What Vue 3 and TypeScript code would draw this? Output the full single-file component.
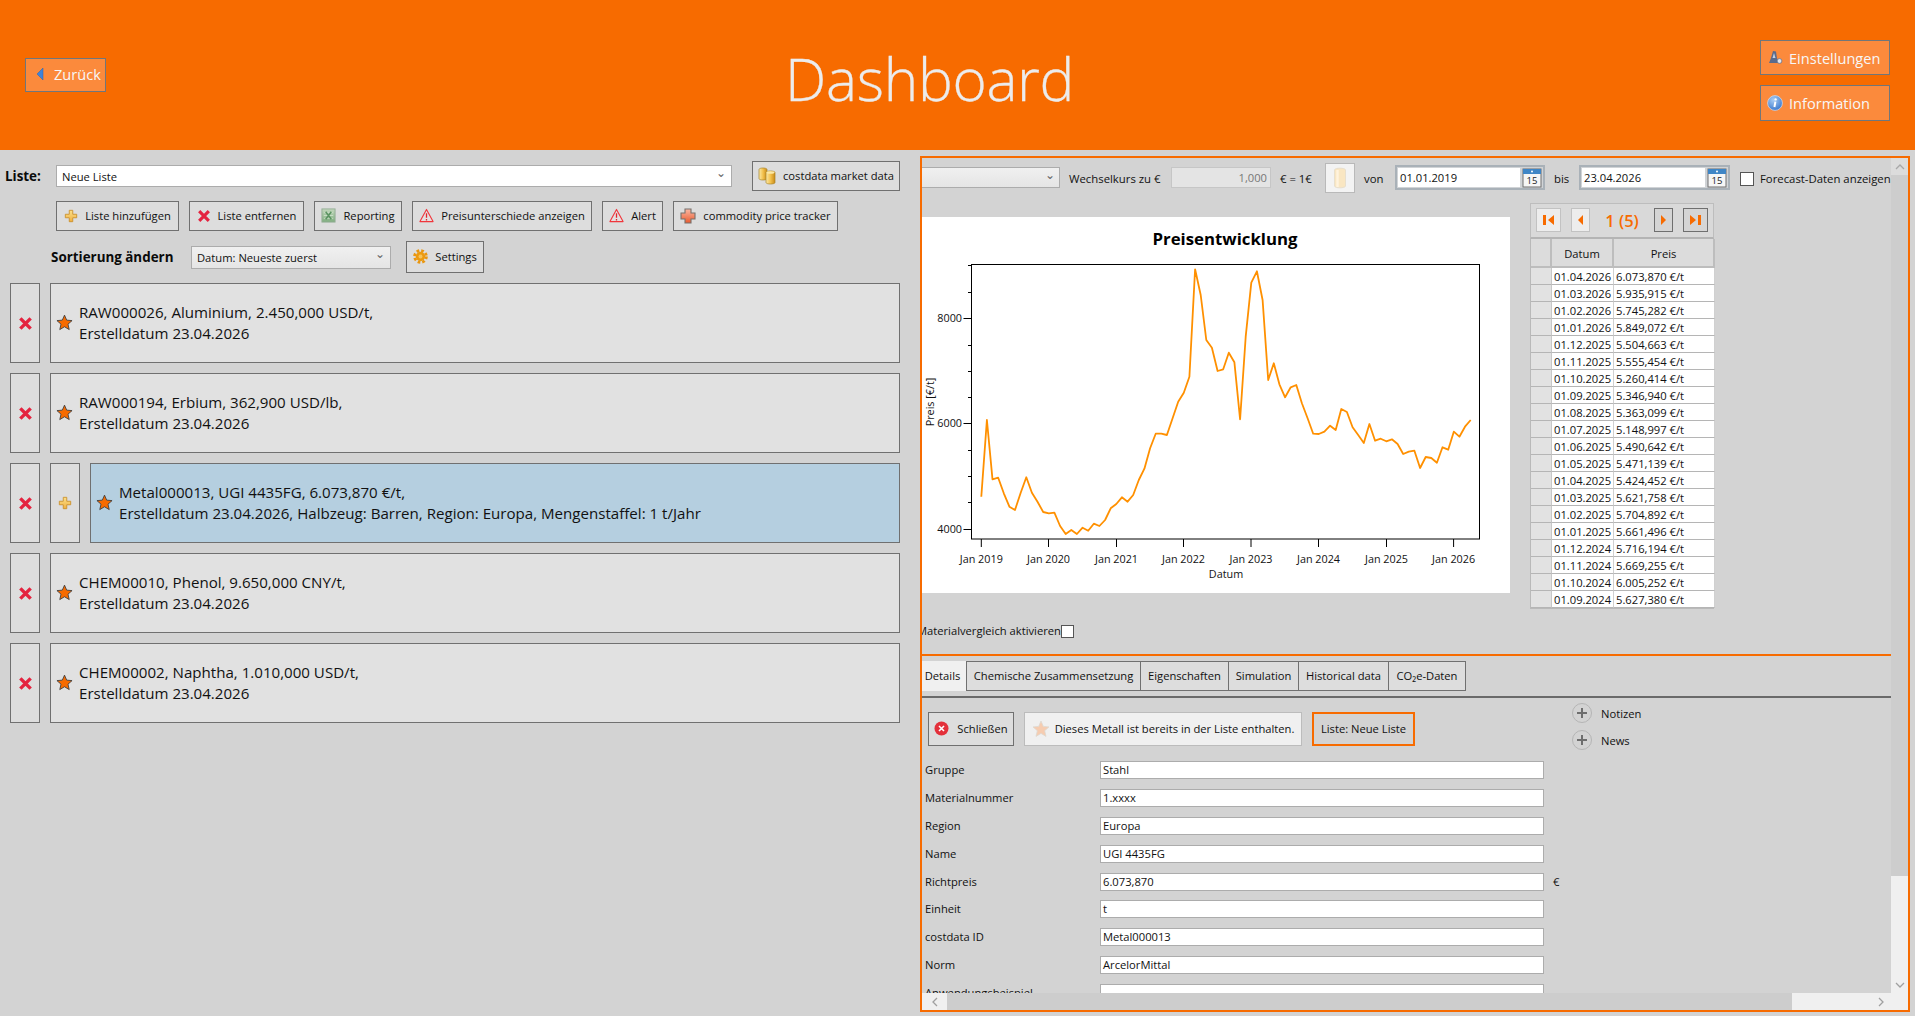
<script setup lang="ts">
interface CardRow { line1: string; line2: string; selected?: boolean }
const cards: CardRow[] = [
  { line1: 'RAW000026, Aluminium, 2.450,000 USD/t,', line2: 'Erstelldatum 23.04.2026' },
  { line1: 'RAW000194, Erbium, 362,900 USD/lb,', line2: 'Erstelldatum 23.04.2026' },
  { line1: 'Metal000013, UGI 4435FG, 6.073,870 €/t,', line2: 'Erstelldatum 23.04.2026, Halbzeug: Barren, Region: Europa, Mengenstaffel: 1 t/Jahr', selected: true },
  { line1: 'CHEM00010, Phenol, 9.650,000 CNY/t,', line2: 'Erstelldatum 23.04.2026' },
  { line1: 'CHEM00002, Naphtha, 1.010,000 USD/t,', line2: 'Erstelldatum 23.04.2026' }
]
const prices: [string, string][] = [
  ['01.04.2026', '6.073,870 €/t'], ['01.03.2026', '5.935,915 €/t'], ['01.02.2026', '5.745,282 €/t'],
  ['01.01.2026', '5.849,072 €/t'], ['01.12.2025', '5.504,663 €/t'], ['01.11.2025', '5.555,454 €/t'],
  ['01.10.2025', '5.260,414 €/t'], ['01.09.2025', '5.346,940 €/t'], ['01.08.2025', '5.363,099 €/t'],
  ['01.07.2025', '5.148,997 €/t'], ['01.06.2025', '5.490,642 €/t'], ['01.05.2025', '5.471,139 €/t'],
  ['01.04.2025', '5.424,452 €/t'], ['01.03.2025', '5.621,758 €/t'], ['01.02.2025', '5.704,892 €/t'],
  ['01.01.2025', '5.661,496 €/t'], ['01.12.2024', '5.716,194 €/t'], ['01.11.2024', '5.669,255 €/t'],
  ['01.10.2024', '6.005,252 €/t'], ['01.09.2024', '5.627,380 €/t']
]
const fields: [string, string][] = [
  ['Gruppe', 'Stahl'], ['Materialnummer', '1.xxxx'], ['Region', 'Europa'], ['Name', 'UGI 4435FG'],
  ['Richtpreis', '6.073,870'], ['Einheit', 't'], ['costdata ID', 'Metal000013'], ['Norm', 'ArcelorMittal'],
  ['Anwendungsbeispiel', '']
]
const tabs = ['Details', 'Chemische Zusammensetzung', 'Eigenschaften', 'Simulation', 'Historical data', 'CO₂e-Daten']

// Traced vertical positions of the monthly price curve, Jan 2019 to Apr 2026.
const trace = [890,660,838,833,880,920,930,878,832,878,905,936,940,938,978,1002,990,1002,983,992,971,978,960,925,912,892,905,885,840,806,745,701,701,705,655,605,578,530,208,285,420,443,513,508,458,487,658,410,248,214,300,540,490,553,592,562,555,610,655,701,702,695,677,690,627,636,682,705,729,672,722,716,724,718,732,762,755,752,804,771,774,788,742,749,695,710,680,660]
const points = trace
  .map((v, i) => `${(59.3 + i * 5.625).toFixed(1)},${(v / 3 - 17).toFixed(1)}`)
  .join(' ')
const yMajor = [{ y: 101, t: '8000' }, { y: 206, t: '6000' }, { y: 312, t: '4000' }]
const yMinor = [48, 75, 128, 154, 180, 233, 259, 285]
const xTicks = [
  { x: 59.3, t: 'Jan 2019' }, { x: 126.5, t: 'Jan 2020' }, { x: 194.5, t: 'Jan 2021' }, { x: 261.5, t: 'Jan 2022' },
  { x: 329, t: 'Jan 2023' }, { x: 396.5, t: 'Jan 2024' }, { x: 464.5, t: 'Jan 2025' }, { x: 531.6, t: 'Jan 2026' }
]
</script>

<template>
  <svg class="defs" width="0" height="0" aria-hidden="true">
    <defs>
      <linearGradient id="gPlus" x1="0" y1="0" x2="0" y2="1"><stop offset="0" stop-color="#fbe08a"/><stop offset="1" stop-color="#f0b040"/></linearGradient>
      <linearGradient id="gGold" x1="0" y1="0" x2="1" y2="0"><stop offset="0" stop-color="#fbe9a8"/><stop offset="0.5" stop-color="#f3c24e"/><stop offset="1" stop-color="#c98a18"/></linearGradient>
      <linearGradient id="gXls" x1="0" y1="0" x2="0" y2="1"><stop offset="0" stop-color="#c3d8bd"/><stop offset="1" stop-color="#7fae7f"/></linearGradient>
      <linearGradient id="gCross" x1="0" y1="0" x2="0" y2="1"><stop offset="0" stop-color="#f9b8a4"/><stop offset="1" stop-color="#ea5a2e"/></linearGradient>
      <radialGradient id="gInfo" cx="0.4" cy="0.3" r="0.8"><stop offset="0" stop-color="#a9cdf4"/><stop offset="1" stop-color="#2f6fc8"/></radialGradient>
      <symbol id="iPlus" viewBox="0 0 16 16"><path d="M6 1.5h4v4.5h4.5v4H10v4.5H6V10H1.5V6H6z" fill="url(#gPlus)" stroke="#c98f2c"/></symbol>
      <symbol id="iX" viewBox="0 0 16 16"><path d="M2.5 2.5l11 11M13.5 2.5l-11 11" stroke="#e4233f" stroke-width="3.6" fill="none"/></symbol>
      <symbol id="iStar" viewBox="0 0 18 18"><path d="M9 1.2l2.3 5.3 5.7.5-4.3 3.8 1.3 5.7L9 13.5l-5 3 1.3-5.7L1 7l5.7-.5z" fill="#f76b00" stroke="#3a3a3a" stroke-width="0.9" stroke-linejoin="round"/></symbol>
      <symbol id="iWarn" viewBox="0 0 16 16"><path d="M8 1.5L15 14.5H1z" fill="#f4e6e6" fill-opacity="0.35" stroke="#f0363c" stroke-width="1.2" stroke-linejoin="round"/><path d="M8 5.5v5M8 11.6v1.6" stroke="#e0262c" stroke-width="1.4"/></symbol>
      <symbol id="iXls" viewBox="0 0 16 16"><rect x="1" y="1" width="14" height="14" fill="url(#gXls)" stroke="#93ac94"/><path d="M3 5h10M3 8h10M3 11h10" stroke="#d6e6d2" stroke-width="0.8"/><path d="M5 4l6 8M11 4l-6 8" stroke="#5c9462" stroke-width="1.6"/></symbol>
      <symbol id="iCross" viewBox="0 0 16 16"><path d="M5 1h6v4h4v6h-4v4H5v-4H1V5h4z" fill="url(#gCross)" stroke="#77706c" stroke-width="1.1"/></symbol>
      <symbol id="iCoins" viewBox="0 0 18 18"><path d="M1 2.5c0-2 8-2 8 0v9c0 2-8 2-8 0z" fill="url(#gGold)" stroke="#a8842a" stroke-width="0.7"/><path d="M8 5.5c0-2 9-2 9 0v10c0 2-9 2-9 0z" fill="url(#gGold)" stroke="#a8842a" stroke-width="0.7"/><ellipse cx="12.5" cy="5.5" rx="4" ry="1.3" fill="#fbe9a8"/></symbol>
      <symbol id="iGear" viewBox="0 0 16 16"><circle cx="8" cy="8" r="6.3" fill="none" stroke="#e9960f" stroke-width="3" stroke-dasharray="2.8 2.15"/><circle cx="8" cy="8" r="5" fill="#ec9a10"/><circle cx="8" cy="8" r="2.1" fill="#f6c45a"/></symbol>
      <symbol id="iCal" viewBox="0 0 20 20"><rect x="1" y="1" width="18" height="18" fill="#f6f6f6" stroke="#6f6f6f"/><rect x="1" y="1" width="18" height="5" fill="#3f86c6"/><circle cx="10" cy="3.5" r="1" fill="#fff"/><text x="10" y="16.4" text-anchor="middle" class="calnum">15</text></symbol>
      <symbol id="iPale" viewBox="0 0 14 22"><path d="M1.5 3c0-2.4 11-2.4 11 0v16c0 2.4-11 2.4-11 0z" fill="#f9e6c2" stroke="#e8dfcd"/><path d="M4.5 3v17" stroke="#fff3dd" stroke-width="2.4"/></symbol>
    </defs>
  </svg>

  <div class="page">
    <header class="top">
      <button class="topbtn back">
        <svg width="8" height="14" viewBox="0 0 8 14"><path d="M7 1v12L1 7z" fill="#3f83d8" stroke="#2b62ad" stroke-width="0.5"/></svg>
        <span>Zurück</span>
      </button>
      <h1 class="title">Dashboard</h1>
      <div class="topright">
        <button class="topbtn wide">
          <svg width="16" height="16" viewBox="0 0 16 16"><path d="M6 1l3 .5 1 7 4 4.5H2l2-5z" fill="#5a6b8c"/><path d="M7 3l1.500 5-3 0z" fill="#c4d0e2"/><circle cx="12.500" cy="11" r="2.400" fill="#e3e7ee" stroke="#5a6a88" stroke-width="0.7"/></svg>
          <span>Einstellungen</span>
        </button>
        <button class="topbtn wide">
          <svg width="16" height="16" viewBox="0 0 16 16"><circle cx="8" cy="8" r="7.400" fill="url(#gInfo)" stroke="#d6e3f4" stroke-width="0.7"/><circle cx="8.600" cy="4.400" r="1.200" fill="#fff"/><path d="M8.400 6.600L7.400 12" stroke="#fff" stroke-width="2"/></svg>
          <span>Information</span>
        </button>
      </div>
    </header>

    <main class="body">
      <section class="left">
        <div class="listrow">
          <label class="bold listlabel">Liste:</label>
          <div class="select listselect"><span>Neue Liste</span><span class="chev">⌄</span></div>
          <button class="btn w-market"><svg class="ic18"><use href="#iCoins"/></svg><span>costdata market data</span></button>
        </div>
        <div class="actions">
          <button class="btn w-add"><svg class="ic14"><use href="#iPlus"/></svg><span>Liste hinzufügen</span></button>
          <button class="btn w-rem"><svg class="ic14"><use href="#iX"/></svg><span>Liste entfernen</span></button>
          <button class="btn w-rep"><svg class="ic15"><use href="#iXls"/></svg><span>Reporting</span></button>
          <button class="btn w-diff"><svg class="ic15"><use href="#iWarn"/></svg><span>Preisunterschiede anzeigen</span></button>
          <button class="btn w-alert"><svg class="ic15"><use href="#iWarn"/></svg><span>Alert</span></button>
          <button class="btn w-track"><svg class="ic16"><use href="#iCross"/></svg><span>commodity price tracker</span></button>
        </div>
        <div class="sortrow">
          <label class="bold sortlabel">Sortierung ändern</label>
          <div class="select sortselect"><span>Datum: Neueste zuerst</span><span class="chev">⌄</span></div>
          <button class="btn w-set"><svg class="ic15"><use href="#iGear"/></svg><span>Settings</span></button>
        </div>
        <div class="cards">
          <div v-for="c in cards" :key="c.line1" class="cardrow">
            <button class="sq"><svg class="ic15"><use href="#iX"/></svg></button>
            <button v-if="c.selected" class="sq"><svg class="ic14"><use href="#iPlus"/></svg></button>
            <div class="card" :class="{ sel: c.selected }">
              <svg class="ic17"><use href="#iStar"/></svg>
              <div class="cardtext"><div>{{ c.line1 }}</div><div>{{ c.line2 }}</div></div>
            </div>
          </div>
        </div>
      </section>

      <section class="panel">
        <div class="scroll">
          <div class="upper">
            <div class="toolbar">
              <div class="select combo"><span></span><span class="chev">⌄</span></div>
              <span class="tlabel">Wechselkurs zu €</span>
              <div class="rate">1,000</div>
              <span class="tlabel">€ = 1€</span>
              <button class="palebtn"><svg width="14" height="22"><use href="#iPale"/></svg></button>
              <span class="tlabel">von</span>
              <div class="date"><span>01.01.2019</span><svg class="cal"><use href="#iCal"/></svg></div>
              <span class="tlabel">bis</span>
              <div class="date"><span>23.04.2026</span><svg class="cal"><use href="#iCal"/></svg></div>
              <div class="forecast"><i class="check"></i><span>Forecast-Daten anzeigen</span></div>
            </div>
            <div class="chartrow">
              <div class="chartcol">
                <svg class="chart" width="588" height="376" viewBox="0 0 588 376">
                  <text x="303" y="28" text-anchor="middle" class="ctitle">Preisentwicklung</text>
                  <rect x="49.5" y="47.5" width="508" height="274.5" fill="none" stroke="#000" stroke-width="1"/>
                  <g stroke="#000" stroke-width="1">
                    <line v-for="y in yMinor" :key="y" x1="46" x2="49.5" :y1="y + 0.5" :y2="y + 0.5"/>
                    <line v-for="m in yMajor" :key="m.t" x1="41.5" x2="49.5" :y1="m.y + 0.5" :y2="m.y + 0.5"/>
                    <line v-for="t in xTicks" :key="t.t" :x1="t.x" :x2="t.x" y1="322" y2="330"/>
                  </g>
                  <text v-for="m in yMajor" :key="m.t + 'l'" x="40" :y="m.y + 4" text-anchor="end" class="ctick">{{ m.t }}</text>
                  <text v-for="t in xTicks" :key="t.t + 'l'" :x="t.x" y="346" text-anchor="middle" class="ctick">{{ t.t }}</text>
                  <text x="304" y="361" text-anchor="middle" class="ctick">Datum</text>
                  <text transform="translate(12 185) rotate(-90)" text-anchor="middle" class="ctick">Preis [€/t]</text>
                  <polyline :points="points" fill="none" stroke="#ff9000" stroke-width="1.8" stroke-linejoin="round"/>
                </svg>
                <div class="compare"><span>Materialvergleich aktivieren</span><i class="check small"></i></div>
              </div>
              <div class="tablebox">
                <div class="pager">
                  <button class="pg w25 off"><svg width="13" height="12" viewBox="0 0 13 12"><path d="M1 1h3v10H1zM12 1v10L6 6z" fill="#f76b00"/></svg></button>
                  <button class="pg w19 off"><svg width="7" height="12" viewBox="0 0 7 12"><path d="M6 1v10L1 6z" fill="#f76b00"/></svg></button>
                  <span class="pagenum">1 (5)</span>
                  <button class="pg w19"><svg width="7" height="12" viewBox="0 0 7 12"><path d="M1 1v10l5-5z" fill="#f76b00"/></svg></button>
                  <button class="pg w25"><svg width="13" height="12" viewBox="0 0 13 12"><path d="M1 1v10l6-5zM9 1h3v10H9z" fill="#f76b00"/></svg></button>
                </div>
                <div class="grid">
                  <div class="gh"></div><div class="gh"><span>Datum</span></div><div class="gh"><span>Preis</span></div>
                  <template v-for="p in prices" :key="p[0]">
                    <div class="rh"></div><div class="gc">{{ p[0] }}</div><div class="gc">{{ p[1] }}</div>
                  </template>
                </div>
              </div>
            </div>
          </div>

          <div class="tabs">
            <button v-for="(t, i) in tabs" :key="t" class="tab" :class="['t' + i, { on: i === 0 }]">{{ t }}</button>
          </div>

          <div class="details">
            <div class="detailmain">
              <div class="detailbtns">
                <button class="btn d-close">
                  <svg width="15" height="15" viewBox="0 0 15 15"><circle cx="7.5" cy="7.5" r="7" fill="#e3303a"/><path d="M5 5l5 5M10 5l-5 5" stroke="#fff" stroke-width="1.6"/></svg>
                  <span>Schließen</span>
                </button>
                <button class="btn d-info">
                  <svg width="18" height="18" viewBox="0 0 18 18"><path d="M9 1l2.3 5.4 5.7.5-4.3 3.8 1.3 5.7L9 13.4l-5 3 1.3-5.7L1 6.9l5.7-.5z" fill="#f6ccb0" stroke="#ddd8d0" stroke-width="0.8"/></svg>
                  <span>Dieses Metall ist bereits in der Liste enthalten.</span>
                </button>
                <button class="btn d-list">Liste: Neue Liste</button>
              </div>
              <div class="form">
                <template v-for="f in fields" :key="f[0]">
                  <span class="flabel">{{ f[0] }}</span>
                  <div class="finput">{{ f[1] }}</div>
                  <span class="funit">{{ f[0] === 'Richtpreis' ? '€' : '' }}</span>
                </template>
              </div>
            </div>
            <div class="side">
              <div v-for="n in ['Notizen', 'News']" :key="n" class="sideitem"><i class="pluscircle"></i><span>{{ n }}</span></div>
            </div>
          </div>
        </div>

        <div class="vbar">
          <div class="vup"><svg width="10" height="6" viewBox="0 0 10 6"><path d="M1 5l4-4 4 4" fill="none" stroke="#a8a8a8" stroke-width="1.3"/></svg></div>
          <div class="vthumb"></div>
          <div class="vtrack"><svg width="10" height="6" viewBox="0 0 10 6"><path d="M1 1l4 4 4-4" fill="none" stroke="#a0a0a0" stroke-width="1.3"/></svg></div>
        </div>
        <div class="hbar">
          <div class="hleft"><svg width="6" height="10" viewBox="0 0 6 10"><path d="M5 1L1 5l4 4" fill="none" stroke="#a0a0a0" stroke-width="1.3"/></svg></div>
          <div class="hthumb"></div>
          <div class="hright"><svg width="6" height="10" viewBox="0 0 6 10"><path d="M1 1l4 4-4 4" fill="none" stroke="#a0a0a0" stroke-width="1.3"/></svg></div>
        </div>
        <div class="corner"></div>
      </section>
    </main>
  </div>
</template>

<style scoped>
.defs { position: absolute; }
.calnum { font: 9.5px "Open Sans", sans-serif; fill: #222; }
.page {
  width: 1915px; height: 1016px; overflow: hidden; background: #d3d3d3; color: #111;
  font-family: "Open Sans", "Liberation Sans", sans-serif; font-size: 11.2px;
}
button { font: inherit; color: inherit; margin: 0; cursor: default; }

.top { height: 150px; background: #f76b00; display: flex; align-items: flex-start; }
.topbtn {
  display: flex; align-items: center; background: #fb8a3c; border: 1px solid #70767a; color: #f7f7f7;
  font-size: 14.6px; padding: 0 0 2px 9px; box-sizing: border-box; text-align: left;
}
.back { width: 81px; height: 34px; margin: 58px 0 0 25px; gap: 10px; padding-left: 10px; }
.title {
  margin: 38px 0 0 679px; font-size: 58.5px; font-weight: 300; color: #ececec; line-height: 80px; letter-spacing: -0.3px;
  -webkit-text-stroke: 0.3px #ececec;
}
.topright { margin: 40px 25px 0 auto; display: flex; flex-direction: column; gap: 10px; }
.wide { width: 130px; height: 35px; gap: 6px; padding: 0 0 0 6px; }
.wide:last-child { height: 36px; }

.body { display: flex; height: 866px; }
.left { width: 920px; flex: none; box-sizing: border-box; }
.bold { font-weight: 700; font-size: 13.4px; color: #0a0a0a; }
.btn {
  display: flex; align-items: center; justify-content: center; gap: 7px; box-sizing: border-box;
  background: #dddddd; border: 1px solid #707070; padding: 0 0 1px; white-space: nowrap;
}
.select {
  display: flex; align-items: center; justify-content: space-between; box-sizing: border-box;
  border: 1px solid #acacac; padding: 0 5px 0 5px;
}
.chev { color: #666; font-size: 12px; line-height: 8px; padding-bottom: 6px; }
.ic14 { width: 14px; height: 14px; } .ic15 { width: 15px; height: 15px; }
.ic16 { width: 16px; height: 16px; } .ic17 { width: 17px; height: 17px; flex: none; } .ic18 { width: 18px; height: 18px; }

.listrow { display: flex; align-items: center; height: 30px; margin-top: 11px; }
.listlabel { width: 51px; padding-left: 5px; flex: none; }
.listselect { width: 676px; height: 22px; background: #fff; margin-right: 20px; }
.w-market { width: 148px; height: 30px; }
.actions { display: flex; gap: 10px; margin: 10px 0 0 56px; }
.actions .btn { height: 30px; }
.w-add { width: 123px; } .w-rem { width: 115px; } .w-rep { width: 88px; } .w-diff { width: 180px; } .w-alert { width: 61px; } .w-track { width: 165px; }
.sortrow { display: flex; align-items: center; margin: 10px 0 0 51px; height: 32px; }
.sortlabel { width: 140px; }
.sortselect { width: 200px; height: 23px; background: linear-gradient(#f0f0f0, #e5e5e5); margin-right: 15px; }
.w-set { width: 78px; height: 32px; }
.cards { display: flex; flex-direction: column; gap: 10px; margin: 10px 20px 0 10px; }
.cardrow { display: flex; gap: 10px; height: 80px; }
.sq { width: 30px; flex: none; background: #dddddd; border: 1px solid #707070; padding: 0; display: flex; align-items: center; justify-content: center; }
.card {
  flex: 1; display: flex; align-items: center; gap: 6px; padding-left: 5px; background: #e1e1e1;
  border: 1px solid #707070; box-sizing: border-box;
}
.card > svg { margin-top: -1px; }
.card.sel { background: #b5cfe0; }
.cardtext { font-size: 15.1px; line-height: 21px; color: #111; }

.panel {
  width: 990px; height: 856px; margin-top: 6px; box-sizing: border-box; border: 2px solid #f76b00;
  display: grid; grid-template: 835px 17px / 969px 17px;
}
.scroll { overflow: hidden; min-width: 0; }
.upper { height: 498px; box-sizing: border-box; border-bottom: 2px solid #f76b00; }
.toolbar {
  display: grid; height: 45px; padding-top: 5px; box-sizing: border-box; align-items: start;
  grid-template-columns: 138px 111px 100px 54px 30px 40px 150px 34px 151px auto;
}
.tlabel { padding-left: 9px; line-height: 31px; white-space: nowrap; font-size: 11.35px; }
.combo { height: 21px; margin-top: 4px; background: linear-gradient(#f0f0f0, #e5e5e5); border-left: 0; padding-right: 4px; }
.rate {
  height: 21px; margin-top: 4px; box-sizing: border-box; background: #e4e4e4; border: 1px solid #c6c6c6; color: #777;
  text-align: right; padding-right: 3px; line-height: 20px;
}
.palebtn { width: 30px; height: 30px; background: #f3f3f3; border: 1px solid #b9b9b9; padding: 0; display: flex; align-items: center; justify-content: center; }
.date {
  height: 25px; margin-top: 2px; box-sizing: border-box; border: 2px solid #a9b1b8; background: #d0d3d6; display: flex;
  align-items: stretch; line-height: 19px;
}
.date span { flex: 1; background: #fff; margin: 1px 0 1px 1px; padding-left: 2px; }
.cal { width: 20px; height: 20px; margin: 0 1px 0 2px; align-self: center; flex: none; }
.forecast { display: flex; align-items: center; gap: 6px; margin: 8px 0 0 10px; white-space: nowrap; font-size: 11.35px; }
.check { display: block; width: 14px; height: 14px; box-sizing: border-box; background: #fff; border: 1px solid #555; flex: none; }
.check.small { width: 13px; height: 13px; }

.chartrow { display: flex; gap: 20px; align-items: flex-start; }
.chartcol { width: 588px; flex: none; }
.chart { display: block; margin-top: 14px; background: #fff; }
.ctitle { font: 700 16.8px "Open Sans", sans-serif; fill: #000; }
.ctick { font: 10.8px "Open Sans", sans-serif; fill: #111; }
.compare { display: flex; align-items: center; margin: 31px 0 0 -5px; white-space: nowrap; line-height: 14px; }
.tablebox { width: 184px; flex: none; }
.pager {
  height: 36px; box-sizing: border-box; border: 1px solid #bdbdbd; border-bottom: 2px solid #b4b4b4; background: #d9d9d9;
  display: flex; align-items: center; padding: 0 0 1px 5px;
}
.pg { height: 24px; background: #d5d5d5; border: 1px solid #6f6f6f; padding: 0; display: flex; align-items: center; justify-content: center; box-sizing: border-box; }
.pg.off { background: #ededed; border-color: #c2c2c2; }
.w25 { width: 25px; } .w19 { width: 19px; margin-left: 10px; }
.w19 + .w25 { margin-left: 10px; }
.pagenum { width: 64px; text-align: center; color: #f76b00; font-size: 16.5px; font-weight: 600; line-height: 24px; padding-top: 2px; box-sizing: border-box; white-space: nowrap; }
.pager > .pagenum + .pg { margin-left: 0; }
.grid {
  display: grid; grid-template-columns: 21px 62px 101px; grid-auto-rows: 17px;
  border: 1px solid #b9b9b9; border-top: 0; box-sizing: border-box; grid-template-rows: 29px;
}
.gh { background: #dcdcdc; border-right: 2px solid #bdbdbd; border-bottom: 2px solid #bdbdbd; box-sizing: border-box; display: flex; align-items: center; justify-content: center; padding-top: 2px; }
.rh { background: #e2e2e2; border-bottom: 1px solid #b5b5b5; border-right: 1px solid #c8c8c8; box-sizing: border-box; }
.gc {
  background: #fff; border-bottom: 1px solid #b5b5b5; box-sizing: border-box; padding-left: 2px; line-height: 18px;
  border-right: 1px solid #d0d0d0; white-space: nowrap; overflow: hidden;
}

.tabs { display: flex; padding-top: 5px; box-sizing: border-box; border-bottom: 2px solid #6a6a6a; align-items: flex-start; height: 42px; }
.tab {
  height: 30px; box-sizing: border-box; background: #dddddd; border: 1px solid #707070; padding: 0 0 2px; white-space: nowrap; margin-left: -1px;
}
.tab.on { background: #f0f0f0; border: 0; margin-left: 0; padding-right: 4px; }
.t0 { width: 45px; } .t1 { width: 175px; } .t2 { width: 89px; } .t3 { width: 71px; } .t4 { width: 91px; } .t5 { width: 78px; }

.details { display: flex; }
.detailmain { width: 650px; flex: none; }
.detailbtns { display: flex; gap: 10px; margin: 14px 0 0 6px; height: 34px; }
.d-close { width: 86px; gap: 8px; }
.d-info { width: 278px; background: #f0f0f0; border-color: #bcbcbc; gap: 5px; }
.d-list { width: 103px; border: 2px solid #f76b00; background: #d3d3d3; }
.form {
  display: grid; grid-template-columns: 178px 444px 28px; grid-auto-rows: 18px; row-gap: 9.9px; margin-top: 15px;
}
.flabel { padding-left: 3px; line-height: 18px; }
.finput { background: #fff; border: 1px solid #acacac; box-sizing: border-box; padding-left: 2px; line-height: 15px; }
.funit { padding-left: 9px; line-height: 18px; }
.side { padding-top: 5px; display: flex; flex-direction: column; gap: 7px; }
.sideitem { display: flex; align-items: center; gap: 9px; height: 20px; }
.pluscircle {
  display: block; width: 20px; height: 20px; border-radius: 50%; box-sizing: border-box; border: 1px solid #b5b5b5; position: relative;
}
.pluscircle::before { content: ""; position: absolute; left: 4px; right: 4px; top: 8px; height: 2px; background: #6e6e6e; }
.pluscircle::after { content: ""; position: absolute; top: 4px; bottom: 4px; left: 8px; width: 2px; background: #6e6e6e; }

.vbar { grid-row: 1; grid-column: 2; display: flex; flex-direction: column; }
.vup { height: 17px; background: #dcdcdc; display: flex; align-items: center; justify-content: center; }
.vthumb { height: 701px; background: #cdcdcd; }
.vtrack { flex: 1; background: #f0f0f0; display: flex; align-items: flex-end; justify-content: center; padding-bottom: 5px; }
.hbar { grid-row: 2; grid-column: 1; display: flex; }
.hleft { width: 25px; background: #f0f0f0; display: flex; align-items: center; justify-content: center; }
.hthumb { width: 845px; background: #cdcdcd; }
.hright { flex: 1; background: #f0f0f0; display: flex; align-items: center; justify-content: flex-end; padding-right: 7px; }
.corner { grid-row: 2; grid-column: 2; background: #f0f0f0; }
</style>

<style>
html, body { margin: 0; padding: 0; background: #d3d3d3; overflow: hidden; }
</style>
